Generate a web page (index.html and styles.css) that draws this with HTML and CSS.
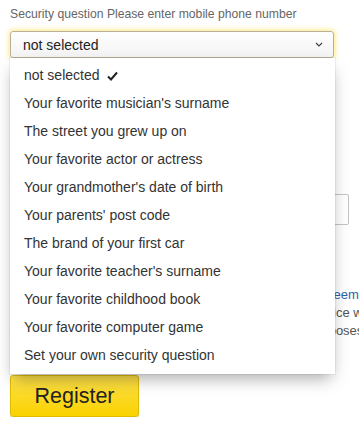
FILE: index.html
```html
<!DOCTYPE html>
<html lang="en">
  <head>
    <meta charset="UTF-8" />
    <meta name="viewport" content="width=device-width, initial-scale=1.0" />
    <title>Registration</title>
    <link rel="stylesheet" href="styles.css">
  </head>
  <body>
    <main class="form">
      <div class="field question">
        <div class="label">Security question Please enter mobile phone number</div>
        <div class="select">
          <span class="select-text">not selected</span>
          <svg class="chevron" width="8" height="5" viewBox="0 0 8 5">
            <path d="M1 1 L4 4 L7 1" fill="none" stroke="#444" stroke-width="1.2"/>
          </svg>
        </div>
        <ul class="menu">
          <li class="item">not selected
            <svg class="check" width="11" height="10" viewBox="0 0 11 10">
              <path d="M1 5.5 L4 8.5 L10 1.5" fill="none" stroke="#222" stroke-width="2"/>
            </svg>
          </li>
          <li class="item">Your favorite musician's surname</li>
          <li class="item">The street you grew up on</li>
          <li class="item">Your favorite actor or actress</li>
          <li class="item">Your grandmother's date of birth</li>
          <li class="item">Your parents' post code</li>
          <li class="item">The brand of your first car</li>
          <li class="item">Your favorite teacher's surname</li>
          <li class="item">Your favorite childhood book</li>
          <li class="item">Your favorite computer game</li>
          <li class="item">Set your own security question</li>
        </ul>
      </div>
      <div class="field answer">
        <div class="label">Answer to security question</div>
        <input class="input" type="text">
      </div>
      <div class="terms">
        <span class="line">By clicking "Register", I accept the terms of the <a href="#">User Agreement</a></span>
        <span class="line">and I gave consent to the processing of data by the service which</span>
        <span class="line">will be used only for the registration and for security purposes</span>
      </div>
      <button class="register">Register</button>
    </main>
  </body>
</html>
```

FILE: styles.css
```css
body {
  margin: 0;
  background: #fff;
  font-family: Arial, "Liberation Sans", sans-serif;
  color: #333;
}
.form {
  width: 339px;
  padding: 6px 10px 0;
  overflow: hidden;
}
.field {
  position: relative;
}
.label {
  font-size: 12.2px;
  line-height: 16px;
  color: #666;
  margin-bottom: 9px;
}
.select {
  box-sizing: border-box;
  width: 324px;
  height: 27px;
  display: flex;
  align-items: center;
  justify-content: space-between;
  padding: 0 10px 0 12px;
  border: 1px solid #b8b198;
  border-radius: 3px;
  background: linear-gradient(#fff, #f3f3f3);
  box-shadow: 0 0 5px 1px rgba(255, 214, 40, 0.6);
  font-size: 14px;
  color: #222;
}
.chevron {
  display: block;
}
.menu {
  position: absolute;
  top: 52px;
  left: 0;
  z-index: 2;
  width: 325px;
  margin: 0;
  padding: 3px 0 5px;
  list-style: none;
  background: #fff;
  box-shadow: 0 8px 16px -4px rgba(0, 0, 0, 0.35), 0 0 0 1px rgba(0, 0, 0, 0.05);
}
.item {
  height: 28px;
  line-height: 28px;
  padding-left: 14px;
  font-size: 14px;
  color: #333;
  white-space: nowrap;
}
.check {
  margin-left: 4px;
  vertical-align: -1px;
}
.answer {
  margin-top: 114px;
}
.answer .label {
  margin-bottom: 6px;
}
.input {
  box-sizing: border-box;
  display: block;
  width: 339px;
  height: 31px;
  margin: 0;
  border: 1px solid #c4c4c4;
  border-radius: 2px;
}
.terms {
  margin-top: 61px;
  font-size: 13px;
  line-height: 18px;
  color: #555;
}
.line {
  display: block;
  white-space: nowrap;
}
.terms a {
  color: #2b64a8;
  text-decoration: none;
}
.register {
  display: block;
  width: 129px;
  height: 42px;
  margin-top: 35px;
  border: 1px solid #e0bc00;
  border-radius: 3px;
  background: linear-gradient(#ffe14a, #f9d200);
  box-shadow: 0 1px 1px rgba(0, 0, 0, 0.2);
  font-family: Arial, "Liberation Sans", sans-serif;
  font-size: 21.5px;
  color: #222;
  padding: 0;
}
```
